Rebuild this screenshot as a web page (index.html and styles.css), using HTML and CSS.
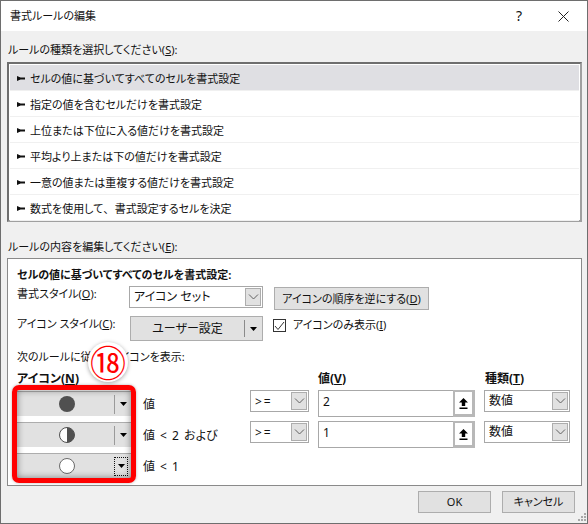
FILE: index.html
```html
<!DOCTYPE html>
<html lang="ja">
<head>
    <meta charset="UTF-8">
    <title>書式ルールの編集</title>
    <link rel="stylesheet" href="styles.css">
</head>
<body>
    <svg class="defs" width="0" height="0">
        <symbol id="chevron" viewBox="0 0 11 6"><path d="M1 0.5 L5.5 5 L10 0.5" fill="none" stroke="#606060"/></symbol>
        <symbol id="drop" viewBox="0 0 7 4"><path d="M0 0 H7 L3.5 4 Z" fill="#000"/></symbol>
        <symbol id="upload" viewBox="0 0 9 11"><path d="M4.5 0 L9 4.5 H6.2 V8 H2.8 V4.5 H0 Z M0.5 9.5 H8.5 V11 H0.5 Z" fill="#000"/></symbol>
    </svg>

    <div class="dialog">
        <div class="title-bar">
            <span class="title-text">書式ルールの編集</span>
            <span class="title-help">?</span>
            <svg class="title-close" width="11" height="11" viewBox="0 0 11 11"><path d="M0.5 0.5 L10.5 10.5 M10.5 0.5 L0.5 10.5" stroke="#222" fill="none"/></svg>
        </div>

        <div class="dialog-body">
            <div class="section-label">ルールの種類を選択してください(<u>S</u>):</div>
            <div class="rule-list">
                <div class="rule-item selected"><i class="rule-arrow"></i>セルの値に基づいてすべてのセルを書式設定</div>
                <div class="rule-item"><i class="rule-arrow"></i>指定の値を含むセルだけを書式設定</div>
                <div class="rule-item"><i class="rule-arrow"></i>上位または下位に入る値だけを書式設定</div>
                <div class="rule-item"><i class="rule-arrow"></i>平均より上または下の値だけを書式設定</div>
                <div class="rule-item"><i class="rule-arrow"></i>一意の値または重複する値だけを書式設定</div>
                <div class="rule-item"><i class="rule-arrow"></i>数式を使用して<span class="comma">、</span>書式設定するセルを決定</div>
            </div>

            <div class="section-label second">ルールの内容を編集してください(<u>E</u>):</div>
            <div class="panel">
                <div class="panel-heading">セルの値に基づいてすべてのセルを書式設定:</div>

                <div class="style-row">
                    <span class="field-label">書式スタイル(<u>O</u>):</span>
                    <div class="combo style-combo">
                        <span class="combo-text">アイコン セット</span>
                        <span class="combo-btn"><svg width="11" height="6"><use href="#chevron"/></svg></span>
                    </div>
                    <div class="btn reverse-btn">アイコンの順序を逆にする(<u>D</u>)</div>
                </div>

                <div class="style-row second">
                    <span class="field-label">アイコン スタイル(<u>C</u>):</span>
                    <div class="split-btn">
                        <span class="split-text">ユーザー設定</span>
                        <span class="split-arrow"><svg width="7" height="4"><use href="#drop"/></svg></span>
                    </div>
                    <span class="check-box"><svg width="11" height="10" viewBox="0 0 11 10"><path d="M1 5 L4 8.5 L10 1" fill="none" stroke="#333"/></svg></span>
                    <span class="check-label">アイコンのみ表示(<u>I</u>)</span>
                </div>

                <div class="rule-note">次のルールに従ってアイコンを表示:</div>

                <div class="rule-grid">
                    <div class="grid-head col-icon">アイコン(<u>N</u>)</div>
                    <div class="grid-head col-value">値(<u>V</u>)</div>
                    <div class="grid-head col-type">種類(<u>T</u>)</div>

                    <div class="icon-btn col-icon">
                        <span class="icon-face"><svg width="18" height="18" viewBox="0 0 18 18"><circle cx="9" cy="9" r="8" fill="#505050"/></svg></span>
                        <span class="icon-arrow"><svg width="7" height="4"><use href="#drop"/></svg></span>
                    </div>
                    <div class="row-label">値</div>
                    <div class="combo op-combo">
                        <span class="combo-text">&gt;=</span>
                        <span class="combo-btn"><svg width="11" height="6"><use href="#chevron"/></svg></span>
                    </div>
                    <div class="value-input">
                        <span class="value-text">2</span>
                        <span class="upload-btn"><svg width="9" height="11"><use href="#upload"/></svg></span>
                    </div>
                    <div class="combo type-combo">
                        <span class="combo-text">数値</span>
                        <span class="combo-btn"><svg width="11" height="6"><use href="#chevron"/></svg></span>
                    </div>

                    <div class="icon-btn col-icon">
                        <span class="icon-face"><svg width="18" height="18" viewBox="0 0 18 18"><circle cx="9" cy="9" r="7.5" fill="#fff" stroke="#505050"/><path d="M9 1.5 A7.5 7.5 0 0 1 9 16.5 Z" fill="#505050"/></svg></span>
                        <span class="icon-arrow"><svg width="7" height="4"><use href="#drop"/></svg></span>
                    </div>
                    <div class="row-label">値 &lt; 2 および</div>
                    <div class="combo op-combo">
                        <span class="combo-text">&gt;=</span>
                        <span class="combo-btn"><svg width="11" height="6"><use href="#chevron"/></svg></span>
                    </div>
                    <div class="value-input">
                        <span class="value-text">1</span>
                        <span class="upload-btn"><svg width="9" height="11"><use href="#upload"/></svg></span>
                    </div>
                    <div class="combo type-combo">
                        <span class="combo-text">数値</span>
                        <span class="combo-btn"><svg width="11" height="6"><use href="#chevron"/></svg></span>
                    </div>

                    <div class="icon-btn col-icon">
                        <span class="icon-face"><svg width="18" height="18" viewBox="0 0 18 18"><circle cx="9" cy="9" r="7.5" fill="#fff" stroke="#6a6a6a"/></svg></span>
                        <span class="icon-arrow focused"><svg width="7" height="4"><use href="#drop"/></svg></span>
                    </div>
                    <div class="row-label">値 &lt; 1</div>
                </div>

                <div class="red-frame"></div>
                <div class="step-badge">⑱</div>
            </div>

            <div class="dialog-footer">
                <div class="btn footer-btn">OK</div>
                <div class="btn footer-btn">キャンセル</div>
            </div>
        </div>

        <svg class="resize-grip" width="9" height="9" viewBox="0 0 9 9" fill="#a8a8a8">
            <rect x="6" y="0" width="2" height="2"/>
            <rect x="3" y="3" width="2" height="2"/><rect x="6" y="3" width="2" height="2"/>
            <rect x="0" y="6" width="2" height="2"/><rect x="3" y="6" width="2" height="2"/><rect x="6" y="6" width="2" height="2"/>
        </svg>
    </div>
</body>
</html>
```

FILE: styles.css
```css
* {
    box-sizing: border-box;
}
body {
    margin: 0;
    font-family: "Noto Sans", "Noto Sans CJK JP", sans-serif;
    font-size: 11px;
    line-height: 16px;
    color: #111;
    font-feature-settings: "palt";
}
.defs {
    position: absolute;
}
.dialog {
    position: relative;
    width: 588px;
    height: 524px;
    background-color: #f0f0f0;
    border: 1px solid #6e6e6e;
    overflow: hidden;
}
.title-bar {
    height: 30px;
    background-color: #fff;
    display: flex;
    align-items: center;
    padding-left: 9px;
}
.title-text {
    flex: 1;
}
.title-help {
    width: 42px;
    font-size: 14px;
}
.title-close {
    margin-right: 18px;
}
.dialog-body {
    padding: 11px 5px 0 6px;
}
.section-label {
    height: 16px;
    margin: 0 0 4px 1px;
}
.section-label.second {
    margin-top: 17px;
    margin-bottom: 3px;
}

/* rule type list */
.rule-list {
    height: 160px;
    background-color: #fff;
    border: 2px solid #6e6e6e;
    border-bottom-color: #a0a0a0;
    border-right-color: #a0a0a0;
    padding: 1px;
}
.rule-item {
    height: 26px;
    display: flex;
    align-items: center;
    padding: 2px 0 0 7px;
    border-bottom: 1px solid #f0f0f0;
}
.rule-item.selected {
    background-color: #dfdfe3;
}
.rule-arrow {
    width: 8px;
    height: 5px;
    margin-right: 5px;
    background-color: #111;
    clip-path: polygon(0 0, 45% 30%, 100% 30%, 100% 70%, 45% 70%, 0 100%);
}
.comma {
    padding-right: 6px;
}

/* rule content panel */
.panel {
    position: relative;
    height: 228px;
    background-color: #fff;
    border: 1px solid #8a8a8a;
    padding: 8px 0 0 9px;
}
.panel-heading {
    font-weight: bold;
    height: 16px;
}
.style-row {
    display: flex;
    align-items: flex-start;
    height: 24px;
    margin-top: 3px;
}
.style-row.second {
    height: 25px;
    margin-top: 6px;
}
.field-label {
    width: 112px;
}
.style-combo {
    width: 134px;
    height: 22px;
    margin-right: 11px;
}
.combo {
    display: flex;
    align-items: stretch;
    background-color: #fff;
    border: 1px solid #a8a8a8;
    padding: 1px;
}
.combo-text {
    flex: 1;
    padding-left: 3px;
    font-size: 12px;
    line-height: 18px;
    white-space: nowrap;
}
.op-combo .combo-text {
    letter-spacing: 2px;
    line-height: 20px;
}
.combo-btn {
    width: 16px;
    display: flex;
    align-items: center;
    justify-content: center;
    background-color: #e1e1e1;
    border: 1px solid #adadad;
}
.btn {
    display: flex;
    align-items: center;
    justify-content: center;
    background-color: #e1e1e1;
    border: 1px solid #adadad;
}
.reverse-btn {
    width: 155px;
    height: 23px;
    margin-top: 1px;
}
.split-btn {
    width: 133px;
    height: 25px;
    margin-left: 1px;
    margin-right: 10px;
    display: flex;
    align-items: center;
    background-color: #e1e1e1;
    border: 1px solid #adadad;
}
.split-text {
    flex: 1;
    text-align: center;
    font-size: 12px;
}
.split-arrow {
    width: 18px;
    height: 17px;
    display: flex;
    align-items: center;
    justify-content: center;
    border-left: 1px solid #8a8a8a;
}
.check-box {
    width: 13px;
    height: 13px;
    margin-top: 3px;
    margin-right: 7px;
    display: flex;
    align-items: center;
    justify-content: center;
    background-color: #fff;
    border: 1px solid #333;
}
.check-label {
    margin-top: 1px;
}
.rule-note {
    height: 16px;
    margin-top: 8px;
}

/* icon rules */
.rule-grid {
    display: grid;
    grid-template-columns: 114px 101px 59px 157px 86px;
    grid-template-rows: 16px repeat(3, 27px);
    column-gap: 9px;
    row-gap: 4px;
    margin-top: 5px;
}
.grid-head {
    font-size: 12px;
    font-weight: bold;
    grid-row: 1;
    padding-top: 1px;
}
.col-icon {
    grid-column: 1;
}
.col-value {
    grid-column: 4;
}
.col-type {
    grid-column: 5;
    margin-left: 1px;
}
.icon-btn {
    height: 25px;
    align-self: center;
    display: flex;
    align-items: center;
    padding-left: 2px;
    background-color: #e1e1e1;
    border-top: 1px solid #adadad;
}
.icon-face {
    flex: 1;
    display: flex;
    align-items: center;
    justify-content: center;
}
.icon-arrow {
    width: 17px;
    height: 19px;
    display: flex;
    align-items: center;
    justify-content: center;
    border-left: 1px solid #9a9a9a;
}
.icon-arrow.focused {
    border: 1px dotted #111;
    width: 14px;
    margin-right: 3px;
}
.row-label {
    padding: 2px 0 0 3px;
    align-self: center;
    font-size: 12px;
    word-spacing: 2px;
    white-space: pre;
}
.op-combo,
.type-combo {
    height: 22px;
}
.value-input {
    display: flex;
    justify-content: space-between;
    background-color: #fff;
    border: 1px solid #a8a8a8;
}
.value-text {
    padding-left: 4px;
    font-size: 12px;
    line-height: 21px;
}
.upload-btn {
    width: 22px;
    display: flex;
    align-items: center;
    justify-content: center;
    margin: -1px -1px -1px 0;
    background-color: #fff;
    border: 3px solid #b8b8b8;
    border-left-width: 2px;
    border-top-width: 2px;
}

/* annotation drawn over the panel */
.red-frame {
    position: absolute;
    left: 4px;
    top: 126px;
    width: 124px;
    height: 98px;
    border: 5px solid #ff0000;
    border-radius: 7px;
    box-shadow: inset 0 0 7px rgba(0, 0, 0, 0.45), 0 0 3px rgba(0, 0, 0, 0.3);
}
.step-badge {
    position: absolute;
    left: 80px;
    top: 83px;
    width: 40px;
    height: 40px;
    display: flex;
    align-items: center;
    justify-content: center;
    padding-bottom: 2px;
    background-color: #fff;
    border-radius: 50%;
    box-shadow: 0 1px 4px rgba(0, 0, 0, 0.35);
    font-family: "Noto Sans CJK JP", sans-serif;
    font-size: 36px;
    color: #ff0000;
}

.dialog-footer {
    display: flex;
    justify-content: flex-end;
    gap: 11px;
    margin-top: 5px;
    padding-right: 7px;
}
.footer-btn {
    width: 73px;
    height: 22px;
}
.resize-grip {
    position: absolute;
    right: 0;
    bottom: 1px;
}
```
